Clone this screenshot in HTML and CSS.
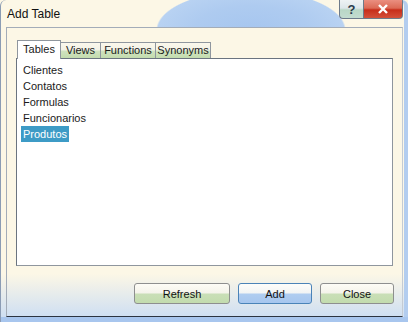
FILE: index.html
```html
<!DOCTYPE html>
<html lang="en">
<head>
    <meta charset="UTF-8">
    <title>Add Table</title>
    <link rel="stylesheet" href="styles.css">
</head>
<body>
    <div class="window">
        <!-- Title bar -->
        <div class="titlebar">
            <span class="title">Add Table</span>
            <div class="caption-buttons">
                <button class="cap help">?</button>
                <button class="cap close">
                    <svg width="12" height="10" viewBox="0 0 12 10">
                        <path d="M2 1 L10 9 M10 1 L2 9" stroke="#fff" stroke-width="2.4"/>
                    </svg>
                </button>
            </div>
        </div>

        <!-- Client area -->
        <div class="client">
            <div class="tabs">
                <div class="tab active">Tables</div>
                <div class="tab views">Views</div>
                <div class="tab">Functions</div>
                <div class="tab">Synonyms</div>
            </div>
            <div class="panel">
                <ul class="list">
                    <li>Clientes</li>
                    <li>Contatos</li>
                    <li>Formulas</li>
                    <li>Funcionarios</li>
                    <li class="selected">Produtos</li>
                </ul>
            </div>
            <div class="actions">
                <button class="btn wide">Refresh</button>
                <button class="btn default">Add</button>
                <button class="btn">Close</button>
            </div>
        </div>
    </div>
</body>
</html>
```

FILE: styles.css
```css
body {
    margin: 0;
    font-family: "Liberation Sans", Arial, sans-serif;
    font-size: 11px;
    color: #1a1a1a;
    background-color: #fcf7e6;
}
.window {
    width: 408px;
    height: 322px;
    box-sizing: border-box;
    display: flex;
    flex-direction: column;
    border-left: 1px solid #8b9cb4;
    border-radius: 6px 6px 0 0;
    padding: 0 5px 0 5px;
    background: linear-gradient(#fcf7e6 85%, #c9dcf4 100%);
    background-color: #fcf7e6;
    box-shadow: inset 0 -5px 0 #a8c6ee, inset -4px 0 0 #b3cdef;
    overflow: hidden;
}
.titlebar {
    height: 27px;
    display: flex;
    justify-content: space-between;
    align-items: flex-start;
    background:
        radial-gradient(ellipse 95px 40px at 250px 30px, #a6c6ef 0%, #aecbf0 60%, #b8d2f2 98%, rgba(184, 210, 242, 0) 100%);
    margin: 0 -5px 0 -5px;
    padding: 0 5px 0 6px;
}
.title {
    margin-top: 7px;
    font-size: 12px;
    color: #111;
}
.caption-buttons {
    display: flex;
}
.cap {
    height: 19px;
    border: 1px solid #6d7a8a;
    border-top: none;
    padding: 0;
    margin: 0;
    font-family: "Liberation Sans", Arial, sans-serif;
}
.help {
    width: 24px;
    border-radius: 0 0 0 4px;
    border-right: none;
    background: linear-gradient(#eef2f4 0%, #dde6ea 45%, #b9d7c6 55%, #c3dcd0 100%);
    color: #2b3a4c;
    font-size: 13px;
    font-weight: bold;
}
.close {
    width: 40px;
    border-radius: 0 0 4px 0;
    background: linear-gradient(#ea8f80 0%, #dc6a56 45%, #c72d1a 55%, #d4503a 100%);
    display: flex;
    align-items: center;
    justify-content: center;
}
.client {
    flex: 1;
    border: 1px solid #a3acb8;
    border-bottom-color: #2c3440;
    border-right-color: #c4cbd4;
    margin-bottom: 5px;
    padding: 12px 9px 0 9px;
    display: flex;
    flex-direction: column;
}
.tabs {
    display: flex;
    align-items: flex-end;
    height: 18px;
    margin-left: 1px;
    position: relative;
    z-index: 1;
}
.tab {
    box-sizing: border-box;
    width: 56px;
    height: 16px;
    line-height: 15px;
    border: 1px solid #8f969e;
    border-bottom: none;
    margin-left: -1px;
    text-align: center;
    background: linear-gradient(#fbf8ec 0%, #f3f2e6 45%, #cfe2bf 55%, #c3dcae 100%);
    color: #1a1a1a;
}
.tab.views {
    width: 41px;
}
.tab.active {
    width: 44px;
    height: 19px;
    line-height: 17px;
    margin-left: 0;
    margin-right: 0;
    background: #fff;
    margin-bottom: -1px;
    position: relative;
    z-index: 1;
}
.panel {
    height: 206px;
    border: 1px solid #8f969e;
    border-left-color: #6b7480;
    border-top-color: #6b7480;
    background: #fff;
}
.list {
    list-style: none;
    margin: 0;
    padding: 3px 0 0 4px;
}
.list li {
    display: table;
    height: 16px;
    line-height: 16px;
    padding: 0 2px;
    color: #1a1a1a;
}
.list li.selected {
    background-color: #3d9bc6;
    color: #fff;
}
.actions {
    display: flex;
    justify-content: flex-end;
    gap: 8px;
    margin-top: 17px;
    margin-right: -1px;
}
.btn {
    width: 74px;
    height: 21px;
    border: 1px solid #8e8f8f;
    border-radius: 3px;
    padding: 0;
    font-family: "Liberation Sans", Arial, sans-serif;
    font-size: 11px;
    color: #111;
    background: linear-gradient(#fdfcf6 0%, #f4f3ea 48%, #c9dfb7 52%, #c3dcae 100%);
}
.btn.wide {
    width: 96px;
}
.btn.default {
    border-color: #4a83b8;
    background: linear-gradient(#fdfdfa 0%, #f2f4f4 48%, #b0cdf0 52%, #a6c6ee 100%);
}
```
